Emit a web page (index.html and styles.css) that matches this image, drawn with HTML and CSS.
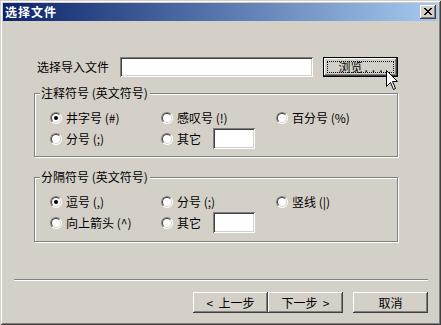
FILE: index.html
```html
<!DOCTYPE html>
<html>
<head>
<meta charset="utf-8">
<link rel="stylesheet" href="styles.css">
</head>
<body>
<div class="window">
  <div class="titlebar">
    <span class="title">选择文件</span>
    <span class="close">
      <svg width="8" height="7" viewBox="0 0 8 7" shape-rendering="crispEdges"><path fill="#000" d="M0 0h2v1H0z M6 0h2v1H6z M1 1h2v1H1z M5 1h2v1H5z M2 2h4v1H2z M3 3h2v1H3z M2 4h4v1H2z M1 5h2v1H1z M5 5h2v1H5z M0 6h2v1H0z M6 6h2v1H6z"/></svg>
    </span>
  </div>
  <div class="content">
    <div class="filerow">
      <span class="filelabel">选择导入文件</span>
      <div class="textbox wide"></div>
      <div class="btn default browse"><span class="focus"></span>浏览<span class="dots">...</span></div>
    </div>

    <div class="group g1">
      <span class="legend">注释符号 (英文符号)</span>
      <div class="options">
        <div class="opt"><span class="radio checked"></span>井字号 (#)</div>
        <div class="opt"><span class="radio"></span>感叹号 (!)</div>
        <div class="opt"><span class="radio"></span>百分号 (%)</div>
        <div class="opt"><span class="radio"></span>分号 (;)</div>
        <div class="opt"><span class="radio"></span>其它<div class="textbox small"></div></div>
      </div>
    </div>

    <div class="group g2">
      <span class="legend">分隔符号 (英文符号)</span>
      <div class="options">
        <div class="opt"><span class="radio checked"></span>逗号 (,)</div>
        <div class="opt"><span class="radio"></span>分号 (;)</div>
        <div class="opt"><span class="radio"></span>竖线 (|)</div>
        <div class="opt"><span class="radio"></span>向上箭头 (^)</div>
        <div class="opt"><span class="radio"></span>其它<div class="textbox small"></div></div>
      </div>
    </div>

    <div class="separator"></div>

    <div class="buttons">
      <div class="btn">&lt;&nbsp;&nbsp;上一步</div>
      <div class="btn">下一步&nbsp;&nbsp;&gt;</div>
      <div class="btn cancel">取消</div>
    </div>
  </div>
  <svg class="cursor" width="13" height="22" viewBox="0 0 13 22" shape-rendering="crispEdges">
    <path d="M0.5 0.5 V16.5 L4.5 12.5 L7.5 19.5 L9.5 18.5 L6.5 11.5 H11.5 Z" fill="#fff" stroke="#000" stroke-width="1" shape-rendering="geometricPrecision"/>
  </svg>
</div>
</body>
</html>
```

FILE: styles.css
```css
* { box-sizing: border-box; }
html, body { margin: 0; padding: 0; }
body {
  width: 441px;
  height: 325px;
  overflow: hidden;
  background: #d4d0c8;
  font-family: "Noto Sans CJK SC", "DejaVu Sans", sans-serif;
  font-size: 12px;
  color: #000;
}
.window {
  position: relative;
  width: 441px;
  height: 325px;
  padding: 3px;
  background: #d4d0c8;
  display: flex;
  flex-direction: column;
  box-shadow: inset 1px 1px 0 #d4d0c8, inset -1px -1px 0 #404040, inset 2px 2px 0 #fff, inset -2px -2px 0 #808080;
}
.titlebar {
  height: 18px;
  flex: none;
  background: linear-gradient(to right, #0a246a, #a6caf0);
  display: flex;
  align-items: center;
  justify-content: space-between;
  padding: 0 2px;
}
.title {
  color: #fff;
  font-weight: bold;
  font-size: 12px;
  line-height: 18px;
  letter-spacing: 1px;
}
.close {
  width: 16px;
  height: 14px;
  background: #d4d0c8;
  display: flex;
  align-items: center;
  justify-content: center;
  box-shadow: inset -1px -1px 0 #404040, inset 1px 1px 0 #fff, inset -2px -2px 0 #808080;
}
.close svg { display: block; margin-top: -1px; }
.content {
  flex: 1;
  padding-top: 36px;
  display: flex;
  flex-direction: column;
}
.filerow {
  display: flex;
  align-items: center;
  margin-left: 34px;
  height: 20px;
}
.filelabel {
  width: 83px;
  line-height: 20px;
}
.textbox {
  background: #fff;
  box-shadow: inset 1px 1px 0 #808080, inset -1px -1px 0 #fff, inset 2px 2px 0 #404040, inset -2px -2px 0 #d4d0c8;
}
.textbox.wide { width: 193px; height: 20px; }
.textbox.small { width: 42px; height: 21px; margin-left: 12px; }
.btn {
  position: relative;
  width: 75px;
  height: 21px;
  background: #d4d0c8;
  display: flex;
  align-items: center;
  justify-content: center;
  line-height: 14px;
  white-space: nowrap;
  box-shadow: inset -1px -1px 0 #404040, inset 1px 1px 0 #fff, inset -2px -2px 0 #808080;
}
.btn.default {
  border: 1px solid #000;
  height: 20px;
  margin-left: 10px;
}
.dots { letter-spacing: 4px; margin-left: 2px; margin-right: -4px; }
.focus {
  position: absolute;
  top: 3px; left: 3px; right: 3px; bottom: 3px;
  border: 1px dotted #000;
}
.group {
  position: relative;
  margin-left: 31px;
  width: 364px;
  border: 1px solid #808080;
  box-shadow: 1px 1px 0 #fff, inset 1px 1px 0 #fff;
  padding: 13px 0 0 15px;
}
.g1 { margin-top: 16px; height: 64px; }
.g2 { margin-top: 20px; height: 65px; }
.legend {
  position: absolute;
  top: -8px;
  left: 5px;
  padding: 0 2px 0 1px;
  background: #d4d0c8;
  line-height: 14px;
}
.options {
  display: grid;
  grid-template-columns: 111px 115px 1fr;
  grid-auto-rows: 21px;
  align-items: center;
}
.opt {
  display: flex;
  align-items: center;
  white-space: nowrap;
  line-height: 14px;
}
.radio {
  position: relative;
  width: 12px;
  height: 12px;
  margin-right: 4px;
  flex: none;
  border-radius: 50%;
  background: #fff;
  border: 1px solid;
  border-color: #808080 #fff #fff #808080;
}
.radio::before {
  content: "";
  position: absolute;
  inset: 0;
  border-radius: 50%;
  border: 1px solid;
  border-color: #404040 #d4d0c8 #d4d0c8 #404040;
}
.radio.checked::after {
  content: "";
  position: absolute;
  left: 3px; top: 3px;
  width: 4px; height: 4px;
  border-radius: 50%;
  background: #000;
}
.separator {
  margin-top: 37px;
  margin-left: 11px;
  width: 414px;
  height: 2px;
  border-top: 1px solid #808080;
  border-bottom: 1px solid #fff;
}
.buttons {
  margin-top: 11px;
  display: flex;
  justify-content: flex-end;
  padding-right: 10px;
}
.btn.cancel { margin-left: 10px; }
.cursor {
  position: absolute;
  left: 386px;
  top: 70px;
}
```
